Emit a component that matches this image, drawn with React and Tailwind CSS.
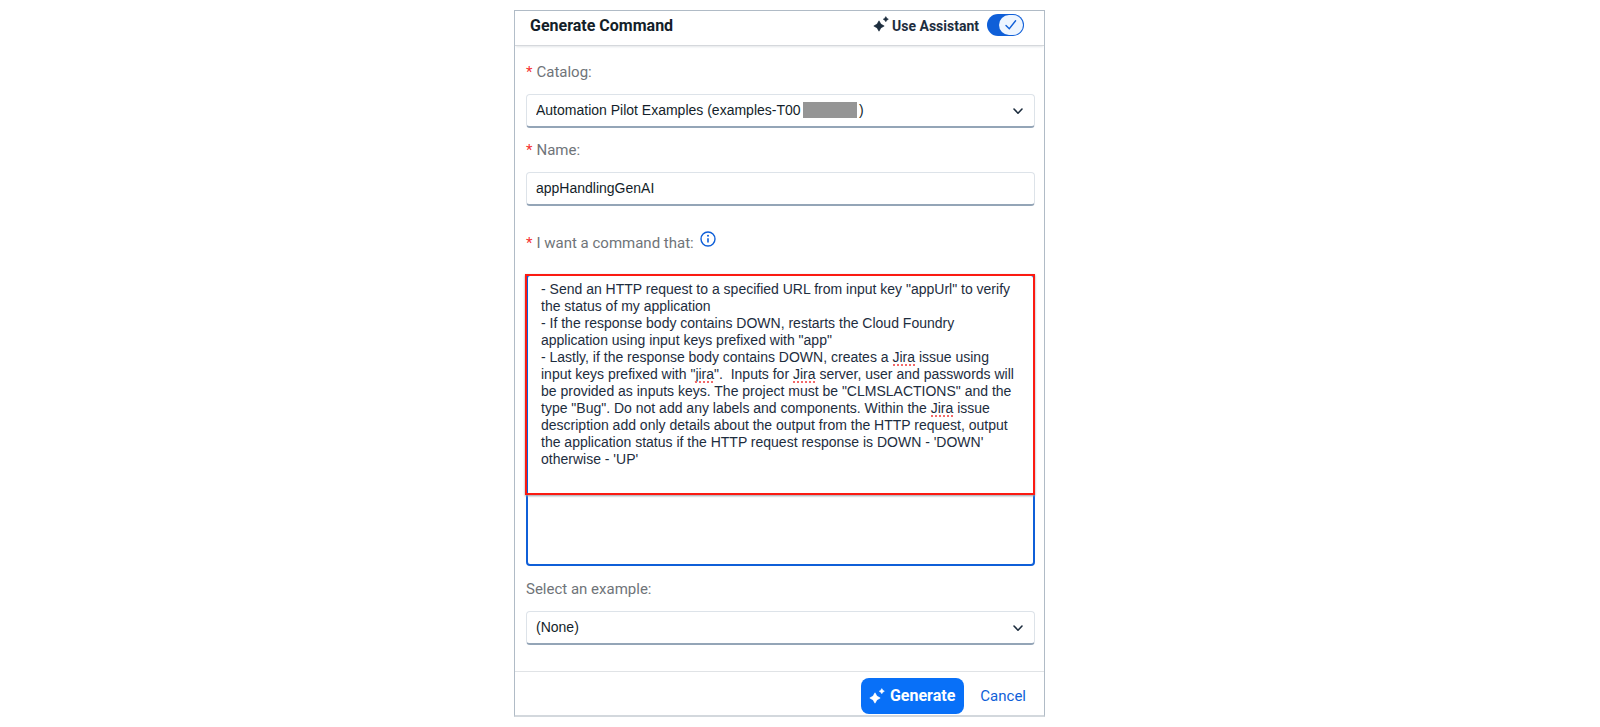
import React, { useState } from "react";

const PROMPT = `- Send an HTTP request to a specified URL from input key "appUrl" to verify the status of my application
- If the response body contains DOWN, restarts the Cloud Foundry application using input keys prefixed with "app"
- Lastly, if the response body contains DOWN, creates a Jira issue using input keys prefixed with "jira".  Inputs for Jira server, user and passwords will be provided as inputs keys. The project must be "CLMSLACTIONS" and the type "Bug". Do not add any labels and components. Within the Jira issue description add only details about the output from the HTTP request, output the application status if the HTTP request response is DOWN - 'DOWN' otherwise - 'UP'`;

const CATALOG = "Automation Pilot Examples (examples-T00" + "\u00a0".repeat(15) + ")";

const fieldClass =
  "block h-[34px] w-full appearance-none rounded border border-[#dde3e9] border-b-2 border-b-[#94a5b7] bg-white px-[9px] font-['Liberation_Sans',sans-serif] text-[14px] text-[#131e29] outline-none";

function Sparkles({ className }) {
  return (
    <svg className={className} viewBox="0 0 16 16" fill="currentColor" aria-hidden="true">
      <path d="M6 4.8 L7.9 8.1 L11.2 10 L7.9 11.9 L6 15.2 L4.1 11.9 L0.8 10 L4.1 8.1 Z" stroke="currentColor" strokeWidth="0.6" strokeLinejoin="round" />
      <path d="M12.8 0.6 L13.8 2.2 L15.4 3.2 L13.8 4.2 L12.8 5.8 L11.8 4.2 L10.2 3.2 L11.8 2.2 Z" stroke="currentColor" strokeWidth="0.5" strokeLinejoin="round" />
    </svg>
  );
}

function Chevron() {
  return (
    <svg className="pointer-events-none absolute right-3 top-3 h-[10px] w-[10px]" viewBox="0 0 10 10" fill="none" stroke="#1d2d3e" strokeWidth="1.6" strokeLinecap="round" strokeLinejoin="round" aria-hidden="true">
      <path d="M1 3 L5 7.2 L9 3" />
    </svg>
  );
}

function Label({ htmlFor, required, children }) {
  return (
    <label htmlFor={htmlFor} className="flex gap-1 text-[15px] leading-5 text-[#6f7479]">
      {required && <span className="text-[#f53232]">*</span>}
      {children}
    </label>
  );
}

const markClass = "pointer-events-none absolute h-0 border-b-2 border-dotted border-[#f26a6a]";

export default function App() {
  const [prompt, setPrompt] = useState(PROMPT);
  const [assist, setAssist] = useState(true);

  return (
    <main className="flex min-h-screen justify-center bg-white pt-[10px] pb-[11px] pr-[41px] font-[Roboto,sans-serif]">
      <form className="flex w-full max-w-[531px] flex-col border border-b-2 border-[#b0bbc6] border-b-[#d3d8dd] bg-white" onSubmit={(e) => e.preventDefault()}>
        <header className="flex h-[35px] items-center justify-between border-b border-[#d5d8dc] pr-5 pl-[15px] pb-1 shadow-[0_2px_2px_-1px_#e3e6ea]">
          <h1 className="text-[16px] font-bold text-[#131e29]">Generate Command</h1>
          <label className="flex items-center text-[14px] font-bold text-[#1d2d3e]">
            <Sparkles className="mr-[3px] mb-1 h-4 w-4" />
            Use Assistant
            <span className="relative mb-0.5 ml-2 flex h-[22px] w-[37px]">
              <input type="checkbox" role="switch" checked={assist} onChange={(e) => setAssist(e.target.checked)} className="peer h-full w-full appearance-none rounded-full bg-[#8396a8] checked:bg-[#0f5fd8]" />
              <svg className="pointer-events-none absolute top-px left-px h-5 w-6 peer-checked:left-3" viewBox="0 0 24 20" fill="none" aria-hidden="true">
                <rect width="24" height="20" rx="10" fill="#edf5ff" />
                {assist && <path d="M7 10.4 L10.3 13.7 L16.6 5.8" stroke="#0f5fd8" strokeWidth="1.4" strokeLinecap="round" />}
              </svg>
            </span>
          </label>
        </header>

        <div className="flex flex-col pt-4 pr-[9px] pl-[11px]">
          <Label htmlFor="catalog" required>Catalog:</Label>
          <div className="relative mt-3">
            <select id="catalog" className={fieldClass}>
              <option>{CATALOG}</option>
            </select>
            <span className="pointer-events-none absolute top-2 left-[277px] h-4 w-[54px] bg-[#959595]" />
            <Chevron />
          </div>

          <div className="mt-3">
            <Label htmlFor="name" required>Name:</Label>
          </div>
          <input id="name" type="text" defaultValue="appHandlingGenAI" className={fieldClass + " mt-3 pb-0.5"} />

          <div className="mt-6 flex items-start gap-1.5">
            <div className="pt-[3px]">
              <Label htmlFor="prompt" required>I want a command that:</Label>
            </div>
            <button type="button" aria-label="More information" className="pt-px text-[#0f5fd8]">
              <svg className="h-4 w-4" viewBox="0 0 16 16" fill="none" stroke="currentColor" aria-hidden="true">
                <circle cx="8" cy="8" r="7" strokeWidth="1.4" />
                <path d="M8 7.2 V11.6" strokeWidth="1.6" />
                <circle cx="8" cy="4.8" r="1" fill="currentColor" stroke="none" />
              </svg>
            </button>
          </div>

          <div className="relative mt-[21px] h-[292px]">
            <textarea id="prompt" spellCheck={false} value={prompt} onChange={(e) => setPrompt(e.target.value)} className="block h-full w-full resize-none overflow-hidden rounded border-2 border-[#0f5fd8] bg-white px-[13px] py-[5px] font-['Liberation_Sans',sans-serif] text-[14px] leading-[17px] text-[#1d2d3e] outline-none" />
            <span className={markClass + " top-[90px] left-[367px] w-[22px]"} />
            <span className={markClass + " top-[107px] left-[169px] w-[18px]"} />
            <span className={markClass + " top-[107px] left-[267px] w-[22px]"} />
            <span className={markClass + " top-[141px] left-[405px] w-[22px]"} />
            <span className="pointer-events-none absolute top-0 right-0 -left-px h-[221px] border-2 border-[#fb1b12] shadow-[0_1px_2px_#9aa0a8]" />
          </div>

          <div className="mt-[13px]">
            <Label htmlFor="example">Select an example:</Label>
          </div>
          <div className="relative mt-3">
            <select id="example" className={fieldClass}>
              <option>(None)</option>
            </select>
            <Chevron />
          </div>
        </div>

        <footer className="mt-[26px] flex items-start justify-end gap-4 border-t border-[#e0e3e6] pt-1.5 pr-[18px] pb-px">
          <button type="submit" className="flex h-9 items-center gap-[5px] rounded-lg bg-[#0870f8] pr-[9px] pl-2 text-[16px] font-bold text-white">
            <Sparkles className="h-4 w-4" />
            Generate
          </button>
          <button type="button" className="h-9 text-[15px] text-[#0f5fd8]">Cancel</button>
        </footer>
      </form>
    </main>
  );
}
